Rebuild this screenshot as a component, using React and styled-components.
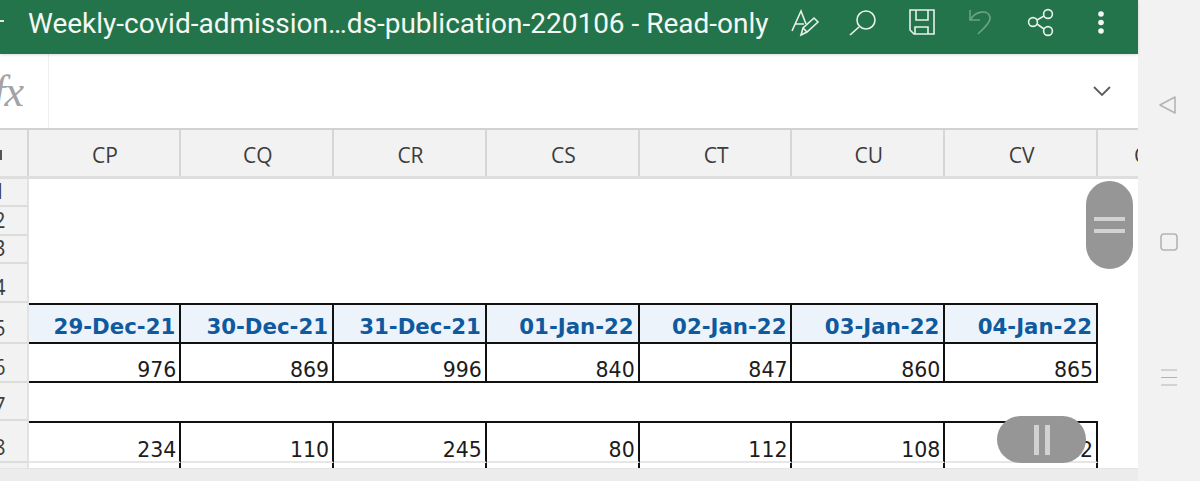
import React from 'react';
import styled, { createGlobalStyle } from 'styled-components';

const GlobalStyle = createGlobalStyle`
  html, body {
    margin: 0;
    padding: 0;
    background: #f2f2f2;
    overflow: hidden;
  }
`;

const Screen = styled.div`
  position: relative;
  display: flex;
  width: 1200px;
  height: 481px;
  overflow: hidden;
  font-family: "Open Sans", sans-serif;
`;

const Main = styled.div`
  display: flex;
  flex-direction: column;
  width: 1138px;
  background: #fff;
`;

const TitleBar = styled.header`
  position: relative;
  z-index: 1;
  display: flex;
  align-items: center;
  height: 54px;
  flex: none;
  background: #23744a;
  box-shadow: 0 1px 3px rgba(0, 0, 0, 0.14);
  color: #f4f8f5;
`;

const BackStub = styled.span`
  width: 4px;
  height: 2px;
  margin-right: 24px;
  margin-bottom: 12px;
  background: #dfeae3;
  flex: none;
`;

const Title = styled.div`
  width: 746px;
  flex: none;
  padding-bottom: 7px;
  font-family: Roboto, "Open Sans", sans-serif;
  font-size: 28px;
  white-space: nowrap;
  line-height: 40px;
`;

const Toolbar = styled.div`
  display: flex;
  width: 346px;
  flex: none;
`;

const ToolIcon = styled.svg`
  display: block;
  width: 346px;
  height: 54px;
  fill: none;
  stroke: #e8f1ec;
  stroke-width: 1.6;
`;

const FormulaBar = styled.div`
  display: flex;
  height: 76px;
  flex: none;
  border-bottom: 2px solid #d2d2d2;
  box-sizing: border-box;
`;

const FxBox = styled.div`
  display: flex;
  justify-content: flex-end;
  align-items: center;
  width: 49px;
  padding-right: 25px;
  box-sizing: border-box;
  overflow: hidden;
  border-right: 1px solid #efefef;
  flex: none;
`;

const Fx = styled.span`
  font-family: "Liberation Serif", serif;
  font-style: italic;
  font-size: 44px;
  color: #a3a3a3;
  letter-spacing: -1px;
`;

const FormulaInput = styled.div`
  display: flex;
  flex: 1;
  justify-content: flex-end;
  align-items: center;
  padding-right: 27px;
`;

const Chevron = styled.svg`
  width: 18px;
  height: 12px;
  fill: none;
  stroke: #5c5c5c;
  stroke-width: 1.8;
`;

const Columns = styled.div`
  display: grid;
  grid-template-columns: 28.5px repeat(7, 152.8px) 1fr;
  height: 49px;
  flex: none;
  background: #f2f2f2;
  border-bottom: 3px solid #dedede;
  box-sizing: border-box;
  overflow: hidden;
`;

const Corner = styled.div`
  border-right: 2px solid #d6d6d6;
  display: flex;
  align-items: center;
  padding-top: 3px;
  box-sizing: border-box;

  &::before {
    content: '';
    width: 2px;
    height: 10px;
    background: #555;
  }
`;

const ColumnLabel = styled.div`
  display: flex;
  align-items: center;
  justify-content: center;
  padding: 3px 0 0 2px;
  border-right: 2px solid #d6d6d6;
  box-sizing: border-box;
  font-size: 21px;
  color: #3c3c3c;
  white-space: nowrap;
  &:last-child {
    border-right: 0;
    justify-content: flex-start;
    padding-left: 36px;
  }
`;

const Sheet = styled.div`
  flex: 1;
  display: flex;
  flex-direction: column;
  overflow: hidden;
`;

const Row = styled.div`
  display: grid;
  grid-template-columns: 28.5px repeat(7, 152.8px) 1fr;
  height: ${p => p.$h}px;
  flex: none;
`;

const RowLabel = styled.div`
  display: flex;
  justify-content: flex-end;
  align-items: flex-end;
  padding-right: 21px;
  overflow: hidden;
  box-sizing: border-box;
  background: #f2f2f2;
  border-right: 2px solid #e2e2e2;
  border-bottom: 2px solid #dcdcdc;
  font-size: 21px;
  line-height: 27px;
  color: #3c3c3c;
`;

const Cell = styled.div`
  display: flex;
  justify-content: flex-end;
  align-items: flex-end;
  box-sizing: border-box;
  padding-right: 3px;
  font-family: "DejaVu Sans", sans-serif;
  font-size: 20.500px;
  line-height: 22px;
  color: #1c1c1c;
  border-right: 2px solid #111;
  border-bottom: 2px solid ${p => (p.$soft ? '#e6e6e6' : '#111')};
  border-top: ${p => (p.$top ? '2px solid #111' : '0')};
`;

const DateCell = styled(Cell)`
  background: #edf3fa;
  color: #0f5a9e;
  font-weight: 700;
  font-size: 21.300px;
  line-height: 25px;
  padding-right: 4px;
  padding-bottom: 3px;
`;

const BottomBar = styled.div`
  height: 13px;
  flex: none;
  background: #ececec;
  border-top: 1px solid #e4e4e4;
  box-sizing: border-box;
`;

const SideNav = styled.nav`
  flex: 1;
  background: #f2f2f2;
`;

const NavDrawing = styled.svg`
  display: block;
  width: 62px;
  height: 481px;
  fill: none;
  stroke: #b4b4b4;
  stroke-width: 1.6;
`;

// the two grey drag handles float over the sheet
const Handle = styled.div`
  position: absolute;
  display: flex;
  flex-direction: ${p => (p.$vertical ? 'column' : 'row')};
  align-items: center;
  justify-content: center;
  gap: ${p => (p.$vertical ? '8px' : '6px')};
  background: #969696;
  border-radius: 24px;
  left: ${p => p.$x}px;
  top: ${p => p.$y}px;
  width: ${p => p.$w}px;
  height: ${p => p.$h}px;
`;

const Grip = styled.span`
  display: block;
  background: #d2d2d2;
  width: ${p => (p.$vertical ? '31px' : '5px')};
  height: ${p => (p.$vertical ? '4px' : '30px')};
`;

const columns = ['CP', 'CQ', 'CR', 'CS', 'CT', 'CU', 'CV', 'C'];
const dates = ['29-Dec-21', '30-Dec-21', '31-Dec-21', '01-Jan-22', '02-Jan-22', '03-Jan-22', '04-Jan-22'];
const row6 = [976, 869, 996, 840, 847, 860, 865];
const row8 = [234, 110, 245, 80, 112, 108, 112];
const empty = ['', '', '', '', '', '', ''];

function ToolbarIcons() {
  return (
    <ToolIcon viewBox="0 0 346 54">
      {/* text + pencil */}
      <path d="M18 31 L27 11 L32 24 M21 24 H30" />
      <path d="M27 35 L29 28 L40 18 L44 22 L33 32 Z M29 28 L33 32" />
      {/* search */}
      <circle cx="92" cy="20" r="9" />
      <path d="M85 27 L76 35" />
      {/* save */}
      <path d="M136 10 H160 V34 H140 L136 30 Z M142 10 V20 H154 V10 M141 34 V27 H154 V34" />
      {/* undo, disabled */}
      <g stroke="#6ba385">
        <path d="M196 10 V20 H206" />
        <path d="M196 20 C202 10 214 10 216 17 C217 22 210 28 204 34" />
      </g>
      {/* share */}
      <circle cx="274" cy="14" r="4.4" />
      <circle cx="259" cy="22" r="4.4" />
      <circle cx="274" cy="31" r="4.4" />
      <path d="M263 20 L270 16 M263 24 L270 29" />
      <g fill="#f4f8f5" stroke="none">
        <circle cx="327" cy="14" r="2.8" />
        <circle cx="327" cy="22.500" r="2.8" />
        <circle cx="327" cy="31" r="2.8" />
      </g>
    </ToolIcon>
  );
}

function SheetRow({ h, label, values, Kind = Cell, top, soft, blank }) {
  return (
    <Row $h={h}>
      <RowLabel>{label}</RowLabel>
      {!blank && values.map((v, i) => (
        <Kind key={i} $top={top} $soft={soft}>{v}</Kind>
      ))}
    </Row>
  );
}

export default function App() {
  return (
    <>
      <GlobalStyle />
      <Screen>
        <Main>
          <TitleBar>
            <BackStub />
            <Title>Weekly-covid-admission…ds-publication-220106 - Read-only</Title>
            <Toolbar>
              <ToolbarIcons />
            </Toolbar>
          </TitleBar>
          <FormulaBar>
            <FxBox><Fx>fx</Fx></FxBox>
            <FormulaInput>
              <Chevron viewBox="0 0 18 12">
                <path d="M1 2 L9 10 L17 2" />
              </Chevron>
            </FormulaInput>
          </FormulaBar>
          <Columns>
            <Corner />
            {columns.map(c => <ColumnLabel key={c}>{c}</ColumnLabel>)}
          </Columns>
          <Sheet>
            <SheetRow h={28} label="1" blank />
            <SheetRow h={29} label="2" blank />
            <SheetRow h={28} label="3" blank />
            <SheetRow h={39} label="4" blank />
            <SheetRow h={41} label="5" values={dates} Kind={DateCell} top />
            <SheetRow h={39} label="6" values={row6} />
            <SheetRow h={38} label="7" blank />
            <SheetRow h={42} label="8" values={row8} top soft />
            <SheetRow h={8} label="" values={empty} />
          </Sheet>
          <BottomBar />
        </Main>
        <SideNav>
          <NavDrawing viewBox="0 0 62 481">
            <path d="M37 97 L22 105 L37 113 Z" strokeLinejoin="round" />
            <rect x="23" y="234" width="16" height="16" rx="3" />
            <path d="M23 370 H39 M23 377.500 H39 M23 385 H39" strokeWidth="1.2" />
          </NavDrawing>
        </SideNav>
        <Handle $vertical $x={1086} $y={181} $w={47} $h={88}>
          <Grip $vertical />
          <Grip $vertical />
        </Handle>
        <Handle $x={997} $y={416} $w={89} $h={47}>
          <Grip />
          <Grip />
        </Handle>
      </Screen>
    </>
  );
}
